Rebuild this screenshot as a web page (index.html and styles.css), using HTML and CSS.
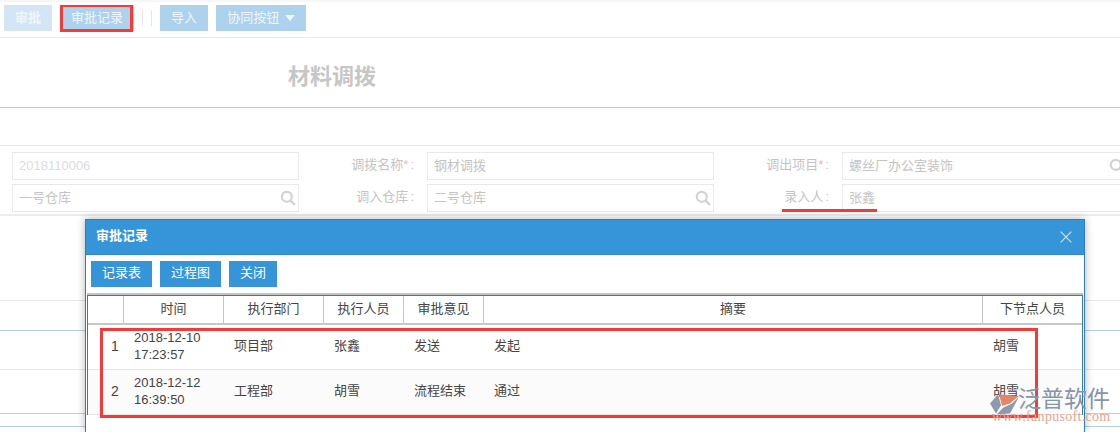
FILE: index.html
```html
<!DOCTYPE html>
<html lang="zh-CN">
<head>
<meta charset="utf-8">
<title>材料调拨</title>
<link rel="stylesheet" href="styles.css">
</head>
<body>
<div class="page">
  <div class="toolbar">
    <button class="tbtn tbtn-light">审批</button>
    <button class="tbtn tbtn-wide">审批记录</button>
    <span class="seps"><i></i><i></i></span>
    <button class="tbtn">导入</button>
    <button class="tbtn tbtn-drop">协同按钮 <span class="caret"></span></button>
  </div>
  <div class="title-band"><h1>材料调拨</h1></div>
  <div class="spacer"></div>
  <div class="form">
    <div class="field muted">2018110006</div>
    <div class="label">调拨名称<em>*</em><span class="colon">:</span></div>
    <div class="field">钢材调拨</div>
    <div class="label">调出项目<em>*</em><span class="colon">:</span></div>
    <div class="field">螺丝厂办公室装饰
      <svg class="search" viewBox="0 0 16 16"><circle cx="6.8" cy="6.8" r="5" /><path d="M10.6 10.6 15 15" /></svg>
    </div>
    <div class="field">一号仓库
      <svg class="search" viewBox="0 0 16 16"><circle cx="6.8" cy="6.8" r="5" /><path d="M10.6 10.6 15 15" /></svg>
    </div>
    <div class="label">调入仓库<span class="colon">:</span></div>
    <div class="field">二号仓库
      <svg class="search" viewBox="0 0 16 16"><circle cx="6.8" cy="6.8" r="5" /><path d="M10.6 10.6 15 15" /></svg>
    </div>
    <div class="label">录入人<span class="colon">:</span></div>
    <div class="field">张鑫</div>
  </div>
  <div class="bg-rows">
    <div class="bg-row r1"></div>
    <div class="bg-row r2 blue"></div>
    <div class="bg-row r3"></div>
    <div class="bg-row r4 blue"></div>
    <div class="bg-row r5 blue"></div>
  </div>
</div>

<section class="modal">
  <header class="modal-head">
    <span>审批记录</span>
    <svg class="close" viewBox="0 0 12 12"><path d="M.7.7l10.6 10.6M11.3.7.7 11.3"/></svg>
  </header>
  <div class="modal-tools">
    <button class="mbtn">记录表</button>
    <button class="mbtn">过程图</button>
    <button class="mbtn mbtn-narrow">关闭</button>
  </div>
  <div class="table-wrap">
    <table>
      <colgroup>
        <col class="c-no"><col class="c-time"><col class="c-dept"><col class="c-person"><col class="c-opinion"><col class="c-summary"><col class="c-next">
      </colgroup>
      <thead>
        <tr><th></th><th>时间</th><th>执行部门</th><th>执行人员</th><th>审批意见</th><th>摘要</th><th>下节点人员</th></tr>
      </thead>
      <tbody>
        <tr><td class="no">1</td><td class="when">2018-12-10<br>17:23:57</td><td>项目部</td><td>张鑫</td><td>发送</td><td>发起</td><td>胡雪</td></tr>
        <tr class="alt"><td class="no">2</td><td class="when">2018-12-12<br>16:39:50</td><td>工程部</td><td>胡雪</td><td>流程结束</td><td>通过</td><td>胡雪</td></tr>
      </tbody>
    </table>
  </div>
</section>

<div class="mark mark-btn"></div>
<div class="mark mark-line"></div>
<div class="mark mark-rows"></div>

<div class="watermark">
  <svg class="wm-logo" viewBox="0 0 30 30" preserveAspectRatio="none">
    <path d="M0 15 8 4 11 17 6 27Z" fill="#8d99ad"/>
    <path d="M9 4 29 6 20 15 12 18Z" fill="#e2876a"/>
    <path d="M29 7 20 27 7 28 13 20 22 15Z" fill="#8d99ad"/>
  </svg>
  <div class="wm-name">泛普软件</div>
  <div class="wm-url">www.fanpusoft.com</div>
</div>
</body>
</html>
```
FILE: styles.css
```css
* { box-sizing: border-box; }
html, body { margin: 0; padding: 0; }
body {
  width: 1120px; height: 432px; overflow: hidden; position: relative;
  background: #fff; color: #444;
  font: 13px/18px "Liberation Sans", "Noto Sans CJK SC", sans-serif;
}
button { font: inherit; border: 0; padding: 0; cursor: pointer; }

.page { width: 1120px; height: 432px; overflow: hidden; }
.toolbar {
  height: 38px; padding: 3px 4px 0; display: flex; align-items: flex-start;
  border-top: 2px solid #f6f6f6; border-bottom: 1px solid #e8e8e8;
}
.tbtn {
  width: 48px; height: 26px; margin-right: 8px;
  background: #aed2ed; color: #eef6fc;
}
.tbtn-light { background: #d4e6f5; font-weight: bold; }
.tbtn-wide { width: 74px; margin-right: 0; }
.tbtn-drop { width: 90px; margin-right: 0; }
.caret {
  display: inline-block; margin-left: 2px; vertical-align: 1px;
  border: 5px solid transparent; border-top: 6px solid #eef6fc; border-bottom: 0;
}
.seps { display: flex; width: 26px; height: 26px; padding: 5px 0 0 8px; gap: 8px; }
.seps i { width: 1px; height: 16px; background: #e6e6e6; }

.title-band { height: 70px; border-bottom: 1px solid #b9cbd9; padding: 26px 0 0 288px; }
.title-band h1 { margin: 0; font-size: 22px; line-height: 26px; color: #c6c6c6; font-weight: bold; }
.spacer { height: 38px; border-bottom: 1px solid #e8e8e8; }

.form {
  height: 70px; padding: 6px 0 0 12px; border-bottom: 2px solid #ececec;
  display: grid; grid-template-columns: 287px 128px 287px 128px 286px;
  grid-template-rows: 28px 28px; row-gap: 4px;
  color: #c4c4c4;
}
.field {
  border: 1px solid #e9e9e9; padding: 0 6px; line-height: 26px; position: relative; white-space: nowrap;
}
.field.muted { color: #dcdcdc; }
.label { text-align: right; line-height: 26px; padding-right: 13px; }
.label em { color: #f3b3b3; font-style: normal; }
.colon { margin-left: 2px; }
.search { position: absolute; right: 2px; top: 5px; width: 16px; height: 16px; fill: none; stroke: #d2d2d2; stroke-width: 2.2; }

.bg-rows { position: relative; height: 216px; }
.bg-row { position: absolute; left: 0; right: 0; height: 1px; background: #e8e8e8; }
.bg-row.blue { background: #b4cfe3; }
.r1 { top: 84px; }
.r2 { top: 114px; }
.r3 { top: 153px; }
.r4 { top: 197px; }
.r5 { top: 210px; }

.modal {
  position: absolute; left: 85px; top: 219px; width: 1000px; height: 213px; overflow: hidden;
  background: #fff; border: 1px solid #2f7fbb; border-bottom: 0; box-shadow: 0 0 8px rgba(0,0,0,.3);
}
.modal-head {
  height: 35px; background: #3694d9; border-bottom: 1px solid #2f86c8;
  color: #fff; font-weight: bold; line-height: 32px; padding: 0 10px;
  display: flex; justify-content: space-between; align-items: center;
}
.modal-head span { margin-top: -2px; }
.close { width: 12px; height: 12px; margin-right: 2px; fill: none; stroke: #cfe4f5; stroke-width: 1.2; }
.modal-tools { display: flex; gap: 8px; padding: 6px 5px 0; height: 38px; }
.mbtn { width: 61px; height: 26px; background: #3694d9; color: #fff; padding-bottom: 2px; }
.mbtn-narrow { width: 48px; }
.table-wrap { margin: 0 1px; border-top: 2px solid #c4c4c4; }
table {
  width: 996px; border-collapse: separate; border-spacing: 0; table-layout: fixed;
  border: 1px solid #337ab7; border-bottom: 0;
}
.c-no { width: 36px; } .c-time { width: 100px; } .c-dept { width: 100px; }
.c-person { width: 80px; } .c-opinion { width: 80px; } .c-summary { width: 499px; } .c-next { width: 99px; }
th {
  height: 29px; font-weight: normal; color: #444; text-align: center; padding: 0 0 2px;
  border-right: 1px solid #c4c4c4; border-bottom: 2px solid #c8c8c8;
}
th:last-child { border-right: 0; }
td { height: 45px; padding: 0 10px 3px; color: #444; border-bottom: 1px solid #e6e6e6; white-space: nowrap; }
td.when { line-height: 17px; padding-bottom: 3px; }
td.no { padding: 0 0 3px 23px; font-size: 14px; }
.alt td { background: #fbfbfb; }

.mark { position: absolute; border: 0 solid #f53a3a; }
.mark-btn { left: 60px; top: 5px; width: 73px; height: 27px; border-width: 2px 3px 3px; }
.mark-line { left: 782px; top: 209px; width: 95px; height: 3px; background: #f53a3a; }
.mark-rows { left: 100px; top: 328px; width: 938px; height: 90px; border-width: 3px; }

.watermark { position: absolute; left: 992px; top: 386px; width: 128px; height: 46px; }
.wm-logo { position: absolute; left: -2px; top: 5px; width: 30px; height: 25px; }
.wm-name { position: absolute; left: 26px; top: -2px; font-size: 23px; line-height: 30px; color: #8595ab; white-space: nowrap; }
.wm-url { position: absolute; left: 0; top: 23px; font: 14px/16px "Liberation Serif", serif; letter-spacing: .3px; color: #e9a48c; white-space: nowrap; }
```
